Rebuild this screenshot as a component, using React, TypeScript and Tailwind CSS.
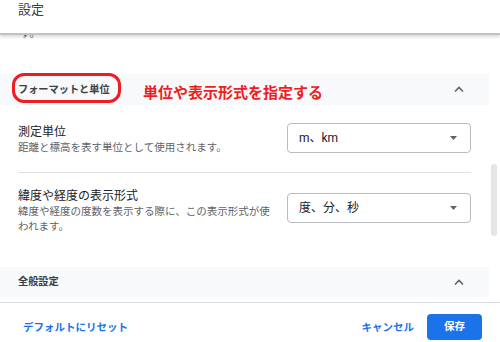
import React from "react";

const Chevron = () => (
  <svg width="10" height="7" viewBox="0 0 10 7" className="mr-[3px]">
    <path d="M1 5.5 L5 1.5 L9 5.5" fill="none" stroke="#5f6368" strokeWidth="1.6" />
  </svg>
);

const Caret = () => (
  <svg width="7" height="4" viewBox="0 0 7 4">
    <path d="M0 0 L7 0 L3.5 4 Z" fill="#5f6368" />
  </svg>
);

const Select = ({ value }: { value: string }) => (
  <div className="flex h-[30px] w-[184px] shrink-0 items-center justify-between rounded-[4px] border border-[#b8bcc1] pl-[11px] pr-[13px] text-[12px] text-[#202124]">
    <span>{value}</span>
    <Caret />
  </div>
);

export default function App() {
  return (
    <div
      className="flex h-[342px] w-[500px] flex-col overflow-hidden bg-white"
      style={{ fontFamily: 'Roboto, "Noto Sans CJK JP", sans-serif' }}
    >
      <div className="relative z-10 h-[35px] shrink-0 border-b-2 border-[#c2c2c2] bg-white pl-[18px] text-[13px] leading-[20px] text-[#3c4043] shadow-[0_2px_3px_rgba(0,0,0,0.15)]">
        設定
      </div>
      <div className="flex min-h-0 flex-1 overflow-hidden">
        <div className="w-[489px] shrink-0">
          <div className="-mt-[8px] h-[14px] pl-[20px] text-[10.5px] leading-[14px] text-[#5f6368]">す。</div>
          <div className="relative mt-[33px] flex h-[31px] items-center justify-between bg-[#f8f9fa] pl-[18px] pr-[22px]">
            <div className="absolute left-[12px] top-[-1px] h-[30px] w-[109px] rounded-[12px] border-[3px] border-[#ee1d23]" />
            <div className="flex items-center">
              <span className="w-[92px] text-[10.2px] font-bold text-[#3c4043]">フォーマットと単位</span>
              <span className="ml-[33px] mt-[7px] text-[15px] font-bold leading-[20px] text-[#ee1d23]">単位や表示形式を指定する</span>
            </div>
            <Chevron />
          </div>
          <div className="px-[18px]">
            <div className="flex items-start justify-between pb-[17px] pt-[18px]">
              <div className="mt-[1px]">
                <div className="text-[12px] leading-[16px] text-[#202124]">測定単位</div>
                <div className="text-[10.5px] leading-[15px] text-[#5f6368]">距離と標高を表す単位として使用されます。</div>
              </div>
              <Select value="m、km" />
            </div>
            <div className="h-px bg-[#e0e0e0]" />
            <div className="flex items-start justify-between pt-[15px]">
              <div className="w-[256px]">
                <div className="text-[12px] leading-[16px] text-[#202124]">緯度や経度の表示形式</div>
                <div className="text-[10.5px] leading-[15px] text-[#5f6368]">緯度や経度の度数を表示する際に、この表示形式が使われます。</div>
              </div>
              <div className="mt-[5px]">
                <Select value="度、分、秒" />
              </div>
            </div>
          </div>
          <div className="mt-[33px] flex h-[30px] items-center justify-between bg-[#f8f9fa] pl-[18px] pr-[22px]">
            <span className="text-[10.2px] font-bold text-[#3c4043]">全般設定</span>
            <Chevron />
          </div>
        </div>
        <div className="flex-1">
          <div className="ml-[2px] mt-[129px] h-[72px] w-[6px] rounded-full bg-[#e3e5e8]" />
        </div>
      </div>
      <div className="flex h-[40px] shrink-0 items-start justify-between border-t border-[#dadce0] pl-[23px] pr-[18px] pt-[11px]">
        <span className="mt-[6px] text-[10.5px] font-bold leading-[15px] text-[#1a73e8]">デフォルトにリセット</span>
        <div className="flex items-start">
          <span className="mt-[6px] text-[10.5px] font-bold leading-[15px] text-[#1a73e8]">キャンセル</span>
          <div className="ml-[13px] flex h-[26px] w-[55px] items-center justify-center rounded-[4px] bg-[#1a73e8] text-[10.5px] font-bold text-white">
            保存
          </div>
        </div>
      </div>
    </div>
  );
}
